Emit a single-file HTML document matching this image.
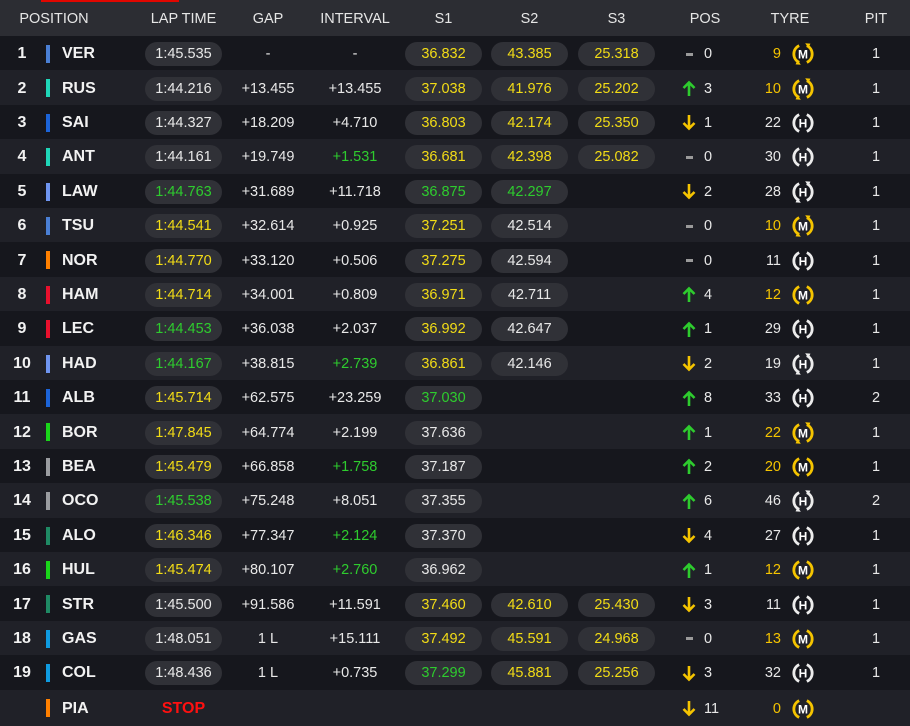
<!DOCTYPE html>
<html><head><meta charset="utf-8"><style>
*{margin:0;padding:0;box-sizing:border-box}
body{width:910px;height:724px;background:#16171d;font-family:"Liberation Sans",sans-serif;color:#e8e8e8;overflow:hidden;position:relative}
.hdr{position:absolute;left:0;top:0;width:910px;height:36px;background:#2c2d33;font-size:14.5px;color:#e6e6e6}
.red{position:absolute;left:41px;top:0;width:138px;height:2px;background:#e10600}
.r{position:absolute;left:0;width:910px;height:34.4px;font-size:14.5px}
.c{position:absolute;top:0;height:100%;display:flex;align-items:center;justify-content:center;white-space:nowrap;padding-top:2px}
.pn{left:0;width:44px;font-weight:bold;font-size:16px;color:#f2f2f2}
.bar{position:absolute;left:46px;top:9px;width:4px;height:18px}
.nm{left:62px;font-weight:bold;font-size:16px;justify-content:flex-start;color:#f2f2f2}
.pill{background:#303137;border-radius:12px;height:24px;width:77px;display:flex;align-items:center;justify-content:center}
.lt{left:145px;width:77px}
.gap{left:228px;width:80px}
.iv{left:315px;width:80px}
.s1{left:405px;width:77px}
.s2{left:491px;width:77px}
.s3{left:578px;width:77px}
.po{left:680px;width:50px;justify-content:flex-start}
.ic{width:18px;display:inline-flex;justify-content:center;margin-right:6px}
.dash{display:inline-block;width:7px;height:3px;background:#9a9a9a}
.tn{left:740px;width:41px;justify-content:flex-end}
.ty{left:791px;width:24px}
.pit{left:860px;width:32px}
.y{color:#f2dc16}.g{color:#2ecc2e}.ty2{color:#f5c400}
.o{background:#16171d}.e{background:#202128}
</style></head><body>
<div class="hdr"><div class="red"></div>
<div class="c" style="left:0;width:108px">POSITION</div>
<div class="c" style="left:140px;width:87px">LAP TIME</div>
<div class="c" style="left:228px;width:80px">GAP</div>
<div class="c" style="left:305px;width:100px">INTERVAL</div>
<div class="c" style="left:405px;width:77px">S1</div>
<div class="c" style="left:491px;width:77px">S2</div>
<div class="c" style="left:578px;width:77px">S3</div>
<div class="c" style="left:680px;width:50px">POS</div>
<div class="c" style="left:760px;width:60px">TYRE</div>
<div class="c" style="left:856px;width:40px">PIT</div>
</div>
<div style="position:absolute;left:0;top:36px;width:910px">

<div class="r o" style="top:0"><div class="c pn">1</div><div class="bar" style="background:#4a7fd4"></div><div class="c nm">VER</div><div class="c lt"><div class="pill">1:45.535</div></div><div class="c gap">-</div><div class="c iv">-</div><div class="c s1"><div class="pill y">36.832</div></div><div class="c s2"><div class="pill y">43.385</div></div><div class="c s3"><div class="pill y">25.318</div></div><div class="c po"><span class="ic"><span class="dash"></span></span>0</div><div class="c tn ty2">9</div><div class="c ty"><svg width="24" height="24" viewBox="0 0 22 22" style="color:#f5c400"><path d="M7.5 3.3A8.5 8.5 0 0 0 7.5 18.7M14.5 3.3A8.5 8.5 0 0 1 14.5 18.7" fill="none" stroke="currentColor" stroke-width="2.6"/><path d="M13 1.2L17.8 1.5L16 5.6ZM9 20.8L4.2 20.5L6 16.4Z" fill="currentColor"/><text x="11" y="15.3" text-anchor="middle" font-size="11" font-weight="bold" fill="#fff" font-family="Liberation Sans">M</text></svg></div><div class="c pit">1</div></div>

<div class="r e" style="top:34.4px"><div class="c pn">2</div><div class="bar" style="background:#1fd6b8"></div><div class="c nm">RUS</div><div class="c lt"><div class="pill">1:44.216</div></div><div class="c gap">+13.455</div><div class="c iv">+13.455</div><div class="c s1"><div class="pill y">37.038</div></div><div class="c s2"><div class="pill y">41.976</div></div><div class="c s3"><div class="pill y">25.202</div></div><div class="c po"><span class="ic"><svg width="14" height="17" viewBox="0 0 14 17"><path d="M7 16V2.5M1.5 8L7 2.5L12.5 8" fill="none" stroke="#2ecc2e" stroke-width="2.6"/></svg></span>3</div><div class="c tn ty2">10</div><div class="c ty"><svg width="24" height="24" viewBox="0 0 22 22" style="color:#f5c400"><path d="M7.5 3.3A8.5 8.5 0 0 0 7.5 18.7M14.5 3.3A8.5 8.5 0 0 1 14.5 18.7" fill="none" stroke="currentColor" stroke-width="2.6"/><path d="M13 1.2L17.8 1.5L16 5.6ZM9 20.8L4.2 20.5L6 16.4Z" fill="currentColor"/><text x="11" y="15.3" text-anchor="middle" font-size="11" font-weight="bold" fill="#fff" font-family="Liberation Sans">M</text></svg></div><div class="c pit">1</div></div>

<div class="r o" style="top:68.8px"><div class="c pn">3</div><div class="bar" style="background:#1c64d8"></div><div class="c nm">SAI</div><div class="c lt"><div class="pill">1:44.327</div></div><div class="c gap">+18.209</div><div class="c iv">+4.710</div><div class="c s1"><div class="pill y">36.803</div></div><div class="c s2"><div class="pill y">42.174</div></div><div class="c s3"><div class="pill y">25.350</div></div><div class="c po"><span class="ic"><svg width="14" height="17" viewBox="0 0 14 17"><path d="M7 1V14.5M1.5 9L7 14.5L12.5 9" fill="none" stroke="#f5c400" stroke-width="2.6"/></svg></span>1</div><div class="c tn">22</div><div class="c ty"><svg width="24" height="24" viewBox="0 0 22 22" style="color:#ececec"><path d="M7.5 3.3A8.5 8.5 0 0 0 7.5 18.7M14.5 3.3A8.5 8.5 0 0 1 14.5 18.7" fill="none" stroke="currentColor" stroke-width="2.6"/><text x="11" y="15.3" text-anchor="middle" font-size="11" font-weight="bold" fill="#fff" font-family="Liberation Sans">H</text></svg></div><div class="c pit">1</div></div>

<div class="r e" style="top:103.2px"><div class="c pn">4</div><div class="bar" style="background:#1fd6b8"></div><div class="c nm">ANT</div><div class="c lt"><div class="pill">1:44.161</div></div><div class="c gap">+19.749</div><div class="c iv g">+1.531</div><div class="c s1"><div class="pill y">36.681</div></div><div class="c s2"><div class="pill y">42.398</div></div><div class="c s3"><div class="pill y">25.082</div></div><div class="c po"><span class="ic"><span class="dash"></span></span>0</div><div class="c tn">30</div><div class="c ty"><svg width="24" height="24" viewBox="0 0 22 22" style="color:#ececec"><path d="M7.5 3.3A8.5 8.5 0 0 0 7.5 18.7M14.5 3.3A8.5 8.5 0 0 1 14.5 18.7" fill="none" stroke="currentColor" stroke-width="2.6"/><text x="11" y="15.3" text-anchor="middle" font-size="11" font-weight="bold" fill="#fff" font-family="Liberation Sans">H</text></svg></div><div class="c pit">1</div></div>

<div class="r o" style="top:137.6px"><div class="c pn">5</div><div class="bar" style="background:#6f95f0"></div><div class="c nm">LAW</div><div class="c lt"><div class="pill g">1:44.763</div></div><div class="c gap">+31.689</div><div class="c iv">+11.718</div><div class="c s1"><div class="pill g">36.875</div></div><div class="c s2"><div class="pill g">42.297</div></div><div class="c po"><span class="ic"><svg width="14" height="17" viewBox="0 0 14 17"><path d="M7 1V14.5M1.5 9L7 14.5L12.5 9" fill="none" stroke="#f5c400" stroke-width="2.6"/></svg></span>2</div><div class="c tn">28</div><div class="c ty"><svg width="24" height="24" viewBox="0 0 22 22" style="color:#ececec"><path d="M7.5 3.3A8.5 8.5 0 0 0 7.5 18.7M14.5 3.3A8.5 8.5 0 0 1 14.5 18.7" fill="none" stroke="currentColor" stroke-width="2.6"/><path d="M13 1.2L17.8 1.5L16 5.6ZM9 20.8L4.2 20.5L6 16.4Z" fill="currentColor"/><text x="11" y="15.3" text-anchor="middle" font-size="11" font-weight="bold" fill="#fff" font-family="Liberation Sans">H</text></svg></div><div class="c pit">1</div></div>

<div class="r e" style="top:172px"><div class="c pn">6</div><div class="bar" style="background:#4a7fd4"></div><div class="c nm">TSU</div><div class="c lt"><div class="pill y">1:44.541</div></div><div class="c gap">+32.614</div><div class="c iv">+0.925</div><div class="c s1"><div class="pill y">37.251</div></div><div class="c s2"><div class="pill">42.514</div></div><div class="c po"><span class="ic"><span class="dash"></span></span>0</div><div class="c tn ty2">10</div><div class="c ty"><svg width="24" height="24" viewBox="0 0 22 22" style="color:#f5c400"><path d="M7.5 3.3A8.5 8.5 0 0 0 7.5 18.7M14.5 3.3A8.5 8.5 0 0 1 14.5 18.7" fill="none" stroke="currentColor" stroke-width="2.6"/><path d="M13 1.2L17.8 1.5L16 5.6ZM9 20.8L4.2 20.5L6 16.4Z" fill="currentColor"/><text x="11" y="15.3" text-anchor="middle" font-size="11" font-weight="bold" fill="#fff" font-family="Liberation Sans">M</text></svg></div><div class="c pit">1</div></div>

<div class="r o" style="top:206.4px"><div class="c pn">7</div><div class="bar" style="background:#ff8000"></div><div class="c nm">NOR</div><div class="c lt"><div class="pill y">1:44.770</div></div><div class="c gap">+33.120</div><div class="c iv">+0.506</div><div class="c s1"><div class="pill y">37.275</div></div><div class="c s2"><div class="pill">42.594</div></div><div class="c po"><span class="ic"><span class="dash"></span></span>0</div><div class="c tn">11</div><div class="c ty"><svg width="24" height="24" viewBox="0 0 22 22" style="color:#ececec"><path d="M7.5 3.3A8.5 8.5 0 0 0 7.5 18.7M14.5 3.3A8.5 8.5 0 0 1 14.5 18.7" fill="none" stroke="currentColor" stroke-width="2.6"/><text x="11" y="15.3" text-anchor="middle" font-size="11" font-weight="bold" fill="#fff" font-family="Liberation Sans">H</text></svg></div><div class="c pit">1</div></div>

<div class="r e" style="top:240.8px"><div class="c pn">8</div><div class="bar" style="background:#e8102d"></div><div class="c nm">HAM</div><div class="c lt"><div class="pill y">1:44.714</div></div><div class="c gap">+34.001</div><div class="c iv">+0.809</div><div class="c s1"><div class="pill y">36.971</div></div><div class="c s2"><div class="pill">42.711</div></div><div class="c po"><span class="ic"><svg width="14" height="17" viewBox="0 0 14 17"><path d="M7 16V2.5M1.5 8L7 2.5L12.5 8" fill="none" stroke="#2ecc2e" stroke-width="2.6"/></svg></span>4</div><div class="c tn ty2">12</div><div class="c ty"><svg width="24" height="24" viewBox="0 0 22 22" style="color:#f5c400"><path d="M7.5 3.3A8.5 8.5 0 0 0 7.5 18.7M14.5 3.3A8.5 8.5 0 0 1 14.5 18.7" fill="none" stroke="currentColor" stroke-width="2.6"/><text x="11" y="15.3" text-anchor="middle" font-size="11" font-weight="bold" fill="#fff" font-family="Liberation Sans">M</text></svg></div><div class="c pit">1</div></div>

<div class="r o" style="top:275.2px"><div class="c pn">9</div><div class="bar" style="background:#e8102d"></div><div class="c nm">LEC</div><div class="c lt"><div class="pill g">1:44.453</div></div><div class="c gap">+36.038</div><div class="c iv">+2.037</div><div class="c s1"><div class="pill y">36.992</div></div><div class="c s2"><div class="pill">42.647</div></div><div class="c po"><span class="ic"><svg width="14" height="17" viewBox="0 0 14 17"><path d="M7 16V2.5M1.5 8L7 2.5L12.5 8" fill="none" stroke="#2ecc2e" stroke-width="2.6"/></svg></span>1</div><div class="c tn">29</div><div class="c ty"><svg width="24" height="24" viewBox="0 0 22 22" style="color:#ececec"><path d="M7.5 3.3A8.5 8.5 0 0 0 7.5 18.7M14.5 3.3A8.5 8.5 0 0 1 14.5 18.7" fill="none" stroke="currentColor" stroke-width="2.6"/><text x="11" y="15.3" text-anchor="middle" font-size="11" font-weight="bold" fill="#fff" font-family="Liberation Sans">H</text></svg></div><div class="c pit">1</div></div>

<div class="r e" style="top:309.6px"><div class="c pn">10</div><div class="bar" style="background:#6f95f0"></div><div class="c nm">HAD</div><div class="c lt"><div class="pill g">1:44.167</div></div><div class="c gap">+38.815</div><div class="c iv g">+2.739</div><div class="c s1"><div class="pill y">36.861</div></div><div class="c s2"><div class="pill">42.146</div></div><div class="c po"><span class="ic"><svg width="14" height="17" viewBox="0 0 14 17"><path d="M7 1V14.5M1.5 9L7 14.5L12.5 9" fill="none" stroke="#f5c400" stroke-width="2.6"/></svg></span>2</div><div class="c tn">19</div><div class="c ty"><svg width="24" height="24" viewBox="0 0 22 22" style="color:#ececec"><path d="M7.5 3.3A8.5 8.5 0 0 0 7.5 18.7M14.5 3.3A8.5 8.5 0 0 1 14.5 18.7" fill="none" stroke="currentColor" stroke-width="2.6"/><path d="M13 1.2L17.8 1.5L16 5.6ZM9 20.8L4.2 20.5L6 16.4Z" fill="currentColor"/><text x="11" y="15.3" text-anchor="middle" font-size="11" font-weight="bold" fill="#fff" font-family="Liberation Sans">H</text></svg></div><div class="c pit">1</div></div>

<div class="r o" style="top:344px"><div class="c pn">11</div><div class="bar" style="background:#1c64d8"></div><div class="c nm">ALB</div><div class="c lt"><div class="pill y">1:45.714</div></div><div class="c gap">+62.575</div><div class="c iv">+23.259</div><div class="c s1"><div class="pill g">37.030</div></div><div class="c po"><span class="ic"><svg width="14" height="17" viewBox="0 0 14 17"><path d="M7 16V2.5M1.5 8L7 2.5L12.5 8" fill="none" stroke="#2ecc2e" stroke-width="2.6"/></svg></span>8</div><div class="c tn">33</div><div class="c ty"><svg width="24" height="24" viewBox="0 0 22 22" style="color:#ececec"><path d="M7.5 3.3A8.5 8.5 0 0 0 7.5 18.7M14.5 3.3A8.5 8.5 0 0 1 14.5 18.7" fill="none" stroke="currentColor" stroke-width="2.6"/><text x="11" y="15.3" text-anchor="middle" font-size="11" font-weight="bold" fill="#fff" font-family="Liberation Sans">H</text></svg></div><div class="c pit">2</div></div>

<div class="r e" style="top:378.4px"><div class="c pn">12</div><div class="bar" style="background:#1ad51a"></div><div class="c nm">BOR</div><div class="c lt"><div class="pill y">1:47.845</div></div><div class="c gap">+64.774</div><div class="c iv">+2.199</div><div class="c s1"><div class="pill">37.636</div></div><div class="c po"><span class="ic"><svg width="14" height="17" viewBox="0 0 14 17"><path d="M7 16V2.5M1.5 8L7 2.5L12.5 8" fill="none" stroke="#2ecc2e" stroke-width="2.6"/></svg></span>1</div><div class="c tn ty2">22</div><div class="c ty"><svg width="24" height="24" viewBox="0 0 22 22" style="color:#f5c400"><path d="M7.5 3.3A8.5 8.5 0 0 0 7.5 18.7M14.5 3.3A8.5 8.5 0 0 1 14.5 18.7" fill="none" stroke="currentColor" stroke-width="2.6"/><path d="M13 1.2L17.8 1.5L16 5.6ZM9 20.8L4.2 20.5L6 16.4Z" fill="currentColor"/><text x="11" y="15.3" text-anchor="middle" font-size="11" font-weight="bold" fill="#fff" font-family="Liberation Sans">M</text></svg></div><div class="c pit">1</div></div>

<div class="r o" style="top:412.8px"><div class="c pn">13</div><div class="bar" style="background:#9a9ca0"></div><div class="c nm">BEA</div><div class="c lt"><div class="pill y">1:45.479</div></div><div class="c gap">+66.858</div><div class="c iv g">+1.758</div><div class="c s1"><div class="pill">37.187</div></div><div class="c po"><span class="ic"><svg width="14" height="17" viewBox="0 0 14 17"><path d="M7 16V2.5M1.5 8L7 2.5L12.5 8" fill="none" stroke="#2ecc2e" stroke-width="2.6"/></svg></span>2</div><div class="c tn ty2">20</div><div class="c ty"><svg width="24" height="24" viewBox="0 0 22 22" style="color:#f5c400"><path d="M7.5 3.3A8.5 8.5 0 0 0 7.5 18.7M14.5 3.3A8.5 8.5 0 0 1 14.5 18.7" fill="none" stroke="currentColor" stroke-width="2.6"/><text x="11" y="15.3" text-anchor="middle" font-size="11" font-weight="bold" fill="#fff" font-family="Liberation Sans">M</text></svg></div><div class="c pit">1</div></div>

<div class="r e" style="top:447.2px"><div class="c pn">14</div><div class="bar" style="background:#9a9ca0"></div><div class="c nm">OCO</div><div class="c lt"><div class="pill g">1:45.538</div></div><div class="c gap">+75.248</div><div class="c iv">+8.051</div><div class="c s1"><div class="pill">37.355</div></div><div class="c po"><span class="ic"><svg width="14" height="17" viewBox="0 0 14 17"><path d="M7 16V2.5M1.5 8L7 2.5L12.5 8" fill="none" stroke="#2ecc2e" stroke-width="2.6"/></svg></span>6</div><div class="c tn">46</div><div class="c ty"><svg width="24" height="24" viewBox="0 0 22 22" style="color:#ececec"><path d="M7.5 3.3A8.5 8.5 0 0 0 7.5 18.7M14.5 3.3A8.5 8.5 0 0 1 14.5 18.7" fill="none" stroke="currentColor" stroke-width="2.6"/><path d="M13 1.2L17.8 1.5L16 5.6ZM9 20.8L4.2 20.5L6 16.4Z" fill="currentColor"/><text x="11" y="15.3" text-anchor="middle" font-size="11" font-weight="bold" fill="#fff" font-family="Liberation Sans">H</text></svg></div><div class="c pit">2</div></div>

<div class="r o" style="top:481.6px"><div class="c pn">15</div><div class="bar" style="background:#1f8a64"></div><div class="c nm">ALO</div><div class="c lt"><div class="pill y">1:46.346</div></div><div class="c gap">+77.347</div><div class="c iv g">+2.124</div><div class="c s1"><div class="pill">37.370</div></div><div class="c po"><span class="ic"><svg width="14" height="17" viewBox="0 0 14 17"><path d="M7 1V14.5M1.5 9L7 14.5L12.5 9" fill="none" stroke="#f5c400" stroke-width="2.6"/></svg></span>4</div><div class="c tn">27</div><div class="c ty"><svg width="24" height="24" viewBox="0 0 22 22" style="color:#ececec"><path d="M7.5 3.3A8.5 8.5 0 0 0 7.5 18.7M14.5 3.3A8.5 8.5 0 0 1 14.5 18.7" fill="none" stroke="currentColor" stroke-width="2.6"/><text x="11" y="15.3" text-anchor="middle" font-size="11" font-weight="bold" fill="#fff" font-family="Liberation Sans">H</text></svg></div><div class="c pit">1</div></div>

<div class="r e" style="top:516px"><div class="c pn">16</div><div class="bar" style="background:#1ad51a"></div><div class="c nm">HUL</div><div class="c lt"><div class="pill y">1:45.474</div></div><div class="c gap">+80.107</div><div class="c iv g">+2.760</div><div class="c s1"><div class="pill">36.962</div></div><div class="c po"><span class="ic"><svg width="14" height="17" viewBox="0 0 14 17"><path d="M7 16V2.5M1.5 8L7 2.5L12.5 8" fill="none" stroke="#2ecc2e" stroke-width="2.6"/></svg></span>1</div><div class="c tn ty2">12</div><div class="c ty"><svg width="24" height="24" viewBox="0 0 22 22" style="color:#f5c400"><path d="M7.5 3.3A8.5 8.5 0 0 0 7.5 18.7M14.5 3.3A8.5 8.5 0 0 1 14.5 18.7" fill="none" stroke="currentColor" stroke-width="2.6"/><text x="11" y="15.3" text-anchor="middle" font-size="11" font-weight="bold" fill="#fff" font-family="Liberation Sans">M</text></svg></div><div class="c pit">1</div></div>

<div class="r o" style="top:550.4px"><div class="c pn">17</div><div class="bar" style="background:#1f8a64"></div><div class="c nm">STR</div><div class="c lt"><div class="pill">1:45.500</div></div><div class="c gap">+91.586</div><div class="c iv">+11.591</div><div class="c s1"><div class="pill y">37.460</div></div><div class="c s2"><div class="pill y">42.610</div></div><div class="c s3"><div class="pill y">25.430</div></div><div class="c po"><span class="ic"><svg width="14" height="17" viewBox="0 0 14 17"><path d="M7 1V14.5M1.5 9L7 14.5L12.5 9" fill="none" stroke="#f5c400" stroke-width="2.6"/></svg></span>3</div><div class="c tn">11</div><div class="c ty"><svg width="24" height="24" viewBox="0 0 22 22" style="color:#ececec"><path d="M7.5 3.3A8.5 8.5 0 0 0 7.5 18.7M14.5 3.3A8.5 8.5 0 0 1 14.5 18.7" fill="none" stroke="currentColor" stroke-width="2.6"/><text x="11" y="15.3" text-anchor="middle" font-size="11" font-weight="bold" fill="#fff" font-family="Liberation Sans">H</text></svg></div><div class="c pit">1</div></div>

<div class="r e" style="top:584.8px"><div class="c pn">18</div><div class="bar" style="background:#0f9be0"></div><div class="c nm">GAS</div><div class="c lt"><div class="pill">1:48.051</div></div><div class="c gap">1 L</div><div class="c iv">+15.111</div><div class="c s1"><div class="pill y">37.492</div></div><div class="c s2"><div class="pill y">45.591</div></div><div class="c s3"><div class="pill y">24.968</div></div><div class="c po"><span class="ic"><span class="dash"></span></span>0</div><div class="c tn ty2">13</div><div class="c ty"><svg width="24" height="24" viewBox="0 0 22 22" style="color:#f5c400"><path d="M7.5 3.3A8.5 8.5 0 0 0 7.5 18.7M14.5 3.3A8.5 8.5 0 0 1 14.5 18.7" fill="none" stroke="currentColor" stroke-width="2.6"/><text x="11" y="15.3" text-anchor="middle" font-size="11" font-weight="bold" fill="#fff" font-family="Liberation Sans">M</text></svg></div><div class="c pit">1</div></div>

<div class="r o" style="top:619.2px"><div class="c pn">19</div><div class="bar" style="background:#0f9be0"></div><div class="c nm">COL</div><div class="c lt"><div class="pill">1:48.436</div></div><div class="c gap">1 L</div><div class="c iv">+0.735</div><div class="c s1"><div class="pill g">37.299</div></div><div class="c s2"><div class="pill y">45.881</div></div><div class="c s3"><div class="pill y">25.256</div></div><div class="c po"><span class="ic"><svg width="14" height="17" viewBox="0 0 14 17"><path d="M7 1V14.5M1.5 9L7 14.5L12.5 9" fill="none" stroke="#f5c400" stroke-width="2.6"/></svg></span>3</div><div class="c tn">32</div><div class="c ty"><svg width="24" height="24" viewBox="0 0 22 22" style="color:#ececec"><path d="M7.5 3.3A8.5 8.5 0 0 0 7.5 18.7M14.5 3.3A8.5 8.5 0 0 1 14.5 18.7" fill="none" stroke="currentColor" stroke-width="2.6"/><text x="11" y="15.3" text-anchor="middle" font-size="11" font-weight="bold" fill="#fff" font-family="Liberation Sans">H</text></svg></div><div class="c pit">1</div></div>

<div class="r e" style="top:653.6px;height:36px"><div class="bar" style="background:#ff8000"></div><div class="c nm">PIA</div><div class="c lt" style="color:#ff1010;font-weight:bold;font-size:16px">STOP</div><div class="c po"><span class="ic"><svg width="14" height="17" viewBox="0 0 14 17"><path d="M7 1V14.5M1.5 9L7 14.5L12.5 9" fill="none" stroke="#f5c400" stroke-width="2.6"/></svg></span>11</div><div class="c tn ty2">0</div><div class="c ty"><svg width="24" height="24" viewBox="0 0 22 22" style="color:#f5c400"><path d="M7.5 3.3A8.5 8.5 0 0 0 7.5 18.7M14.5 3.3A8.5 8.5 0 0 1 14.5 18.7" fill="none" stroke="currentColor" stroke-width="2.6"/><text x="11" y="15.3" text-anchor="middle" font-size="11" font-weight="bold" fill="#fff" font-family="Liberation Sans">M</text></svg></div></div>
</div>
</body></html>
